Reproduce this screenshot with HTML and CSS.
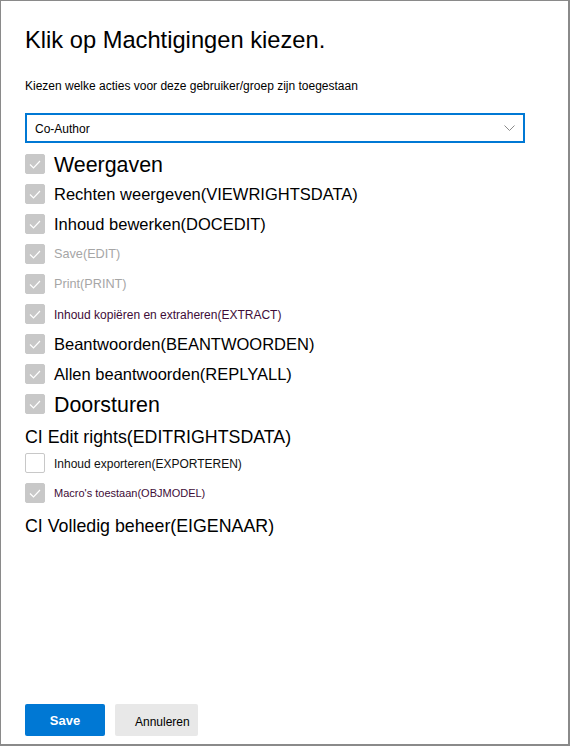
FILE: index.html
```html
<!DOCTYPE html>
<html lang="nl">
<head>
<meta charset="utf-8">
<title>Machtigingen kiezen</title>
<link rel="stylesheet" href="styles.css">
</head>
<body>
<div class="frame">
  <h1 class="title">Klik op Machtigingen kiezen.</h1>
  <p class="subtitle">Kiezen welke acties voor deze gebruiker/groep zijn toegestaan</p>
  <div class="select">
    <span class="select-value">Co-Author</span>
    <svg class="chevron" width="11" height="6" viewBox="0 0 11 6"><polyline points="0.5,0.5 5.5,5.5 10.5,0.5" fill="none" stroke="#8a8a8a" stroke-width="1"/></svg>
  </div>
  <ul class="perms">
    <li class="row"><span class="box checked"><svg viewBox="0 0 20 20"><polyline points="5,10.5 8.5,14 15,7"/></svg></span><span class="lbl xl">Weergaven</span></li>
    <li class="row"><span class="box checked"><svg viewBox="0 0 20 20"><polyline points="5,10.5 8.5,14 15,7"/></svg></span><span class="lbl md">Rechten weergeven(VIEWRIGHTSDATA)</span></li>
    <li class="row"><span class="box checked"><svg viewBox="0 0 20 20"><polyline points="5,10.5 8.5,14 15,7"/></svg></span><span class="lbl md">Inhoud bewerken(DOCEDIT)</span></li>
    <li class="row"><span class="box checked"><svg viewBox="0 0 20 20"><polyline points="5,10.5 8.5,14 15,7"/></svg></span><span class="lbl sm muted">Save(EDIT)</span></li>
    <li class="row"><span class="box checked"><svg viewBox="0 0 20 20"><polyline points="5,10.5 8.5,14 15,7"/></svg></span><span class="lbl sm muted">Print(PRINT)</span></li>
    <li class="row"><span class="box checked"><svg viewBox="0 0 20 20"><polyline points="5,10.5 8.5,14 15,7"/></svg></span><span class="lbl xs plum">Inhoud kopiëren en extraheren(EXTRACT)</span></li>
    <li class="row"><span class="box checked"><svg viewBox="0 0 20 20"><polyline points="5,10.5 8.5,14 15,7"/></svg></span><span class="lbl md">Beantwoorden(BEANTWOORDEN)</span></li>
    <li class="row"><span class="box checked"><svg viewBox="0 0 20 20"><polyline points="5,10.5 8.5,14 15,7"/></svg></span><span class="lbl md">Allen beantwoorden(REPLYALL)</span></li>
    <li class="row"><span class="box checked"><svg viewBox="0 0 20 20"><polyline points="5,10.5 8.5,14 15,7"/></svg></span><span class="lbl xl">Doorsturen</span></li>
    <li class="group">CI Edit rights(EDITRIGHTSDATA)</li>
    <li class="row"><span class="box"></span><span class="lbl xs dark">Inhoud exporteren(EXPORTEREN)</span></li>
    <li class="row"><span class="box checked"><svg viewBox="0 0 20 20"><polyline points="5,10.5 8.5,14 15,7"/></svg></span><span class="lbl xxs plum">Macro's toestaan(OBJMODEL)</span></li>
    <li class="group">CI Volledig beheer(EIGENAAR)</li>
  </ul>
  <div class="actions">
    <button class="btn primary">Save</button>
    <button class="btn secondary">Annuleren</button>
  </div>
</div>
</body>
</html>
```
FILE: styles.css
```css
* { box-sizing: border-box; }
html, body { margin: 0; padding: 0; background: #fff; }
body { font-family: "Liberation Sans", Arial, sans-serif; color: #000; }

.frame {
  width: 570px;
  height: 746px;
  border: 1px solid #8a8a8a;
  border-right-width: 2px;
  border-bottom-width: 2px;
  padding: 25px 0 8px 24px;
  display: flex;
  flex-direction: column;
}

.title {
  margin: 0;
  font-weight: normal;
  font-size: 23.7px;
  line-height: 28px;
}

.subtitle {
  margin: 24px 0 0;
  font-size: 12px;
  line-height: 16px;
}

.select {
  margin-top: 19px;
  width: 500px;
  height: 30px;
  border: 2px solid #0078d4;
  display: flex;
  align-items: center;
  justify-content: space-between;
  padding: 2px 8px 0 8px;
}
.select-value { font-size: 12px; }
.chevron { display: block; margin-top: -2px; }

.perms {
  list-style: none;
  margin: 6px 0 0;
  padding: 0;
}

.row {
  height: 30px;
  display: flex;
  align-items: center;
}

.box {
  width: 20px;
  height: 20px;
  border: 1px solid #c8c8c8;
  border-radius: 2px;
  background: #fff;
  flex: none;
  margin-right: 9px;
}
.box.checked { background: #c8c8c8; border-color: #c8c8c8; }
.box svg { display: block; width: 20px; height: 20px; margin: -1px; }
.box svg polyline { fill: none; stroke: #fff; stroke-width: 1.2; }

.lbl { white-space: nowrap; }
.xl { font-size: 21.4px; padding-top: 3px; }
.md { font-size: 16.5px; }
.sm { font-size: 12.7px; }
.xs { font-size: 12px; padding-top: 2px; }
.xxs { font-size: 11px; }
.muted { color: #a6a6a6; }
.plum { color: #3e0c38; }
.dark { color: #111; }

.group {
  padding-top: 8px;
  height: 29px;
  font-size: 17.8px;
  line-height: 21px;
}

.actions {
  margin-top: auto;
  display: flex;
  gap: 10px;
}

.btn {
  height: 32px;
  border: none;
  border-radius: 2px;
  font-family: "Liberation Sans", Arial, sans-serif;
  cursor: pointer;
}
.primary {
  width: 80px;
  background: #0078d4;
  color: #fff;
  font-weight: bold;
  font-size: 13px;
}
.secondary {
  background: #e8e8e8;
  color: #000;
  font-size: 12px;
  padding: 4px 8px 0 20px;
}
```
